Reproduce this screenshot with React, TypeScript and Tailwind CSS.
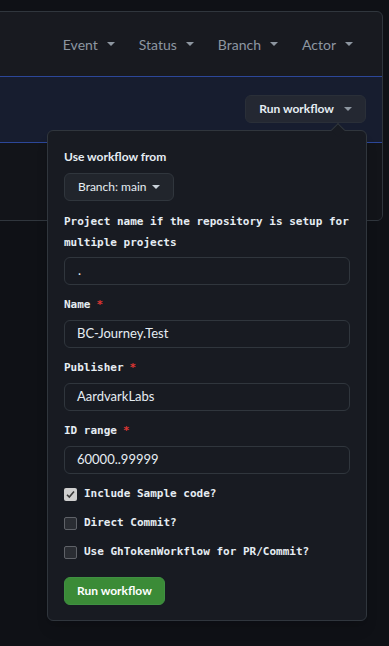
const sans = "font-['Lato','Noto_Sans',sans-serif]";
const mono = "font-['DejaVu_Sans_Mono','Liberation_Mono',monospace]";

const Caret = ({ className = "" }: { className?: string }) => (
  <svg width="8" height="4" viewBox="0 0 8 4" className={className}>
    <path d="M0 0h8L4 4z" fill="currentColor" />
  </svg>
);

const Filter = ({ label }: { label: string }) => (
  <div className="flex items-center gap-[9px] text-[14px] text-[#8d96a0]">
    <span>{label}</span>
    <Caret />
  </div>
);

const Field = ({ label, value, required }: { label: string; value: string; required?: boolean }) => (
  <div className="mt-[10px]">
    <div className={`${mono} text-[11px] font-bold leading-[20px] text-[#e6edf3]`}>
      {label}
      {required && <span className="ml-[6px] text-[#da3633]">*</span>}
    </div>
    <div className="mt-[5px] flex h-[28px] w-[286px] items-center rounded-md border border-[#30363d] bg-[#181b22] px-[12px] text-[13px] text-[#e6edf3]">
      {value}
    </div>
  </div>
);

const Check = ({ label, checked }: { label: string; checked?: boolean }) => (
  <div className={`flex h-[29px] items-center gap-[7px] ${mono} text-[11px] font-bold text-[#e6edf3]`}>
    {checked ? (
      <div className="flex h-[13px] w-[13px] items-center justify-center rounded-[2px] bg-[#cfcfcf]">
        <svg width="9" height="9" viewBox="0 0 9 9">
          <path d="M1 4.8l2.3 2.3L8 1.5" stroke="#3a3a3a" strokeWidth="1.6" fill="none" />
        </svg>
      </div>
    ) : (
      <div className="h-[13px] w-[13px] rounded-[2px] border border-[#5f6268] bg-[#2a2d33]" />
    )}
    <span>{label}</span>
  </div>
);

export default function App() {
  return (
    <div className={`relative h-[646px] w-[389px] overflow-hidden bg-[#0f1116] pt-[11px] ${sans}`}>
      <div className="ml-[-10px] w-[393px] overflow-hidden rounded-tr-md rounded-br-md border border-[#30363d] bg-[#181a20]">
        <div className="flex h-[64px] items-center justify-end gap-[24px] pr-[29px]">
          <Filter label="Event" />
          <Filter label="Status" />
          <Filter label="Branch" />
          <Filter label="Actor" />
        </div>
        <div className="flex h-[67px] items-center justify-end border-y border-[#2c4799] bg-[#171d2f] pr-[16px]">
          <div className="mb-[1px] flex h-[28px] items-center gap-[10px] whitespace-nowrap rounded-md border border-[#2a2f38] bg-[#242832] px-[13px] text-[12px] font-bold text-[#e6edf3]">
            Run workflow
            <Caret className="text-[#8d96a0]" />
          </div>
        </div>
        <div className="h-[77px] bg-[#121419]" />
      </div>

      <div className="absolute left-[47px] top-[130px] w-[320px] rounded-md border border-[#30363d] bg-[#181b22] px-[16px] pb-[15px] pt-[17px] shadow-lg">
        <div className="absolute -top-[6px] right-[23px] h-[10px] w-[10px] rotate-45 border-l border-t border-[#30363d] bg-[#181b22]" />
        <div className="text-[12px] font-bold leading-[18px] text-[#e6edf3]">Use workflow from</div>
        <div className="mt-[7px] flex h-[28px] w-fit items-center gap-[6px] whitespace-nowrap rounded-md border border-[#30363d] bg-[#21252c] px-[13px] text-[12px] text-[#e6edf3]">
          Branch: main
          <Caret className="text-[#c9d1d9]" />
        </div>
        <div className={`mt-[10px] ${mono} text-[11px] font-bold leading-[21px] text-[#e6edf3]`}>
          Project name if the repository is setup for multiple projects
        </div>
        <div className="mt-[4px] flex h-[28px] w-[286px] items-center rounded-md border border-[#30363d] bg-[#181b22] px-[13px] text-[13px] text-[#e6edf3]">
          .
        </div>
        <Field label="Name" value="BC-Journey.Test" required />
        <Field label="Publisher" value="AardvarkLabs" required />
        <Field label="ID range" value="60000..99999" required />
        <div className="mt-[6px]">
          <Check label="Include Sample code?" checked />
          <Check label="Direct Commit?" />
          <Check label="Use GhTokenWorkflow for PR/Commit?" />
        </div>
        <button className="mt-[10px] flex h-[28px] items-center rounded-md border border-[#3f9142] bg-[#3b8b37] px-[12px] text-[12px] font-bold text-white">
          Run workflow
        </button>
      </div>
    </div>
  );
}
